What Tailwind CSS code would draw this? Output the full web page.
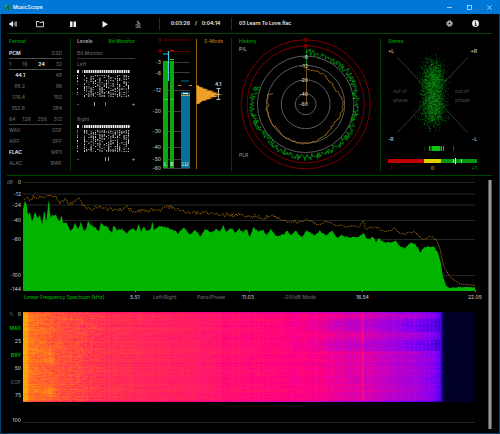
<!DOCTYPE html>
<html lang="en">
<head>
<meta charset="utf-8">
<title>MusicScope</title>
<script src="https://cdn.jsdelivr.net/npm/@tailwindcss/browser@4"></script>
</head>
<body class="bg-black">
<div class="flex min-h-screen flex-col border-x border-b border-[#04406f] bg-black font-['Inter','Liberation_Sans',sans-serif] text-[5px] font-medium leading-[5px] text-[#606060]">

  <header class="-mx-px flex h-[14px] items-center bg-[#0078d7] pl-1 text-white">
    <svg class="size-[7px]" viewBox="0 0 14 14" aria-hidden="true"><circle cx="7" cy="7" r="7" fill="#0c8a86"/><path d="M4 11c1-4 2-7 5-9M8 3c2 2 1 5 1 9M4 5l2 2" fill="none" stroke="#053f4c" stroke-width="1.6"/><circle cx="4" cy="4" r="1.4" fill="#7fd0c0"/></svg>
    <h1 class="ml-0.5 flex-1 font-medium">MusicScope</h1>
    <button class="flex w-5 justify-center" aria-label="Minimize"><svg class="size-[5px]" viewBox="0 0 5 5"><path d="M0 2.5h5" stroke="#fff" stroke-width=".6"/></svg></button>
    <button class="flex w-5 justify-center" aria-label="Maximize"><svg class="size-[5px]" viewBox="0 0 5 5"><rect x=".4" y=".4" width="4.2" height="4.2" fill="none" stroke="#fff" stroke-width=".6"/></svg></button>
    <button class="mr-px flex w-5 justify-center" aria-label="Close"><svg class="size-[5px]" viewBox="0 0 5 5"><path d="M.3.3l4.4 4.4M4.700.3L.3 4.700" stroke="#fff" stroke-width=".6"/></svg></button>
  </header>

  <nav class="ml-1.5 mr-[7px] flex h-5 items-center border-b border-[#004800] text-[#f0f0f0]">
    <button class="w-[17px] pl-0.5" aria-label="Volume"><svg class="size-2" viewBox="0 0 16 16"><path d="M1 5.500h3l4-4v13l-4-4H1z" fill="currentColor"/><path d="M10 5.500a4 4 0 010 5M12 3.500a7 7 0 010 9M14 2.500a9 9 0 010 11" fill="none" stroke="currentColor" stroke-width="1.400"/></svg></button>
    <button class="flex w-8 justify-center" aria-label="Open"><svg class="size-2" viewBox="0 0 16 16"><path d="M1 13.500V3h5l1.500 2H12V3.500h3v10z" fill="none" stroke="currentColor" stroke-width="1.700"/></svg></button>
    <button class="flex w-[33px] justify-center" aria-label="Pause"><svg class="size-2" viewBox="0 0 16 16"><path d="M2 3h5v11H2zM9 3h5v11H9z" fill="currentColor"/></svg></button>
    <button class="flex w-8 justify-center" aria-label="Play"><svg class="size-2" viewBox="0 0 16 16"><path d="M3 2l11 6.500L3 15z" fill="currentColor"/></svg></button>
    <button class="flex w-[33px] justify-center text-[#c0c0c0]" aria-label="Analyze"><svg class="size-2" viewBox="0 0 16 16"><path d="M8 1v6M6 3l4 5M9 4.500c4 1.500 4 6 1 8M3 9.500h6M3 14.500h11M6 12h5" fill="none" stroke="currentColor" stroke-width="1.400"/></svg></button>
    <div class="ml-[5px] h-3 w-px bg-[#004800]"></div>
    <p class="flex w-[71px] items-center justify-center gap-[5px] font-semibold"><time>0:03:26</time><span>/</span><time>0:04:14</time></p>
    <div class="h-3 w-px bg-[#004800]"></div>
    <p class="ml-[7px] flex-1 font-semibold">03 Learn To Love.flac</p>
    <button class="flex w-[26px] justify-center text-[#c0c0c0]" aria-label="Settings"><svg class="size-[7px]" viewBox="0 0 14 14"><circle cx="7" cy="7" r="6" fill="none" stroke="currentColor" stroke-width="2" stroke-dasharray="2.400 2.300"/><circle cx="7" cy="7" r="3.500" fill="none" stroke="currentColor" stroke-width="3"/></svg></button>
    <button class="mr-1 flex w-[26px] justify-center" aria-label="Information"><svg class="size-[7px]" viewBox="0 0 14 14"><circle cx="7" cy="7" r="6.800" fill="currentColor"/><path d="M7 2.500v2.200M5.500 6.200H7.400V11M5.200 11h4" fill="none" stroke="#000" stroke-width="1.800"/></svg></button>
  </nav>

  <section class="ml-1.5 mr-[7px] grid grid-cols-[64fr_78fr_83fr_149fr_111fr] border-b border-[#004800] py-1">
    <div class="border-r border-[#003c00] pl-0.5 pr-2">
      <h2 class="h-[10px] font-semibold leading-[6px] text-[#009600]">Format</h2>
      <div class="flex h-[11px] items-center justify-between border-b border-[#505050]"><b class="font-semibold text-[#e8e8e8]">PCM</b><span>DSD</span></div>
      <div class="flex h-[11px] items-center justify-between border-b border-[#505050]"><span>1</span><span>16</span><b class="text-[#e8e8e8]">24</b><span>32</span></div>
      <div class="flex h-[11px] items-center justify-between"><b class="w-4 text-right font-semibold text-[#e8e8e8]">44.1</b><span>48</span></div>
      <div class="flex h-[11px] items-center justify-between"><span class="w-4 text-right">88.2</span><span>96</span></div>
      <div class="flex h-[11px] items-center justify-between"><span class="w-4 text-right">176.4</span><span>192</span></div>
      <div class="flex h-[11px] items-center justify-between"><span class="w-4 text-right">352.8</span><span>384</span></div>
      <div class="flex h-[11px] items-center justify-between border-b border-[#404040]"><span>64</span><span>128</span><span>256</span><span>512</span></div>
      <div class="flex h-[11px] items-center justify-between"><span>WAV</span><span>DSF</span></div>
      <div class="flex h-[11px] items-center justify-between"><span>AIFF</span><span>DFF</span></div>
      <div class="flex h-[11px] items-center justify-between"><b class="font-semibold text-[#e8e8e8]">FLAC</b><span>MP3</span></div>
      <div class="flex h-[11px] items-center justify-between"><span>ALAC</span><span>BWF</span></div>
    </div>

    <div class="pl-1.5 pr-3.5">
      <div class="flex h-[10px] items-start justify-between leading-[6px]"><button class="font-semibold text-[#aaa]">Levels</button><button class="font-semibold text-[#009600]">Bit Monitor</button></div>
      <h3 class="flex h-[11px] items-center border-b border-[#383838]">Bit Monitor</h3>
      <h4 class="flex h-[11px] items-center">Left</h4>
      <svg id="bitsL" class="w-full" viewBox="77 70 58 27" aria-label="Left channel bits"></svg>
      <div class="flex h-3.5 items-center text-[#ccc]"><span>-</span><div class="flex h-1 flex-1 justify-start gap-[10px] pl-[15px]"><i class="w-px bg-[#aaa]"></i><i class="w-px bg-[#777]"></i></div><span>+</span></div>
      <h4 class="mt-[3px] flex h-[11px] items-center">Right</h4>
      <svg id="bitsR" class="w-full" viewBox="77 70 58 27" aria-label="Right channel bits"></svg>
      <div class="flex h-3.5 items-center text-[#ccc]"><span>-</span><div class="flex h-1 flex-1 justify-start gap-0.5 pl-[26px]"><i class="w-px bg-[#999]"></i><i class="w-px bg-[#999]"></i></div><span>+</span></div>
    </div>

    <div class="border-r border-[#003c00]">
      <svg class="w-full" viewBox="149 38 82 133" aria-label="Level meters">
        <path d="M163 62.500h27M163 72.500h27M163 90.500h27M163 111.500h27M163 131.500h27M163 147.500h27M163 159.500h27M163 168.500h27" stroke="#3c3c3c"/>
        <path d="M163 40h27" stroke="#4a0000" stroke-width="1.500"/><path d="M163 51.500h27" stroke="#5c0000"/>
        <g fill="#bbb" text-anchor="end">
          <text x="161" y="42" fill="#b00000">3</text><text x="161" y="53" fill="#d80000">0</text><text x="161" y="64">-3</text><text x="161" y="75">-6</text><text x="161" y="92">-12</text><text x="161" y="113">-20</text><text x="161" y="133">-30</text><text x="161" y="149">-40</text><text x="161" y="161">-50</text><text x="161" y="170">-60</text>
        </g>
        <path d="M163 61h5v107h-5zM170 61h4v107h-4z" fill="#0ca80c"/>
        <path d="M163 99.500h5M170 99.500h4M170 59.500h4" stroke="#1ce01c"/>
        <path d="M163 54h5" stroke="#0a6a45" stroke-width="2"/><path d="M170 50.500h4" stroke="#e00000"/>
        <path d="M168.500 51v30" stroke="#4cc8f4" stroke-width="1.200"/>
        <path d="M181 92h9v76h-9z" fill="#08719b"/>
        <path d="M183 93.500h5" stroke="#fff"/><path d="M181 95.500h9" stroke="#c99a30"/>
        <path d="M178 85.500h3M189 85.500h3" stroke="#d08a20"/><path d="M181 81h8" stroke="#074a66" stroke-width="1.500"/>
        <g fill="#dff4df"><text x="164" y="166">L</text><text x="170" y="166">R</text><text x="182" y="166">LU</text></g>
        <path d="M196.500 39v130" stroke="#9a600a"/>
        <text x="204" y="43" fill="#b87818">S-Mode</text>
        <path transform="translate(148 34) scale(.3333)" d="M146 153l9 3-2 2 14 3-4 2 19 3-10 2 28 3-12 3 28 3-14 2 23 3-27 3 14 3-28 3 9 3-20 3 4 2-18 3 3 2-9 3 4 2-11 1z" fill="#f0a028"/>
        <text x="215" y="86" fill="#e4e4e4">4.1</text><path d="M216.500 88.500h4M216.500 99.500h4M218.500 88.500v11" stroke="#ddd" stroke-width=".8"/>
      </svg>
    </div>

    <div class="border-r border-[#003c00]">
      <svg class="w-full" viewBox="232 38 148 133" aria-label="Level history">
        <g fill="none" stroke="#5c5c5c"><circle cx="305.700" cy="104.300" r="48.300"/><circle cx="305.700" cy="104.300" r="39"/><circle cx="305.700" cy="104.300" r="24.400"/><circle cx="305.700" cy="104.300" r="10.400"/></g>
        <g fill="none" stroke="#7c0000"><circle cx="305.700" cy="104.300" r="64.600"/><circle cx="305.700" cy="104.300" r="58.600"/></g>
        <path id="histG" fill="none" stroke="#009c10" stroke-width=".8"/>
        <path id="histO" fill="none" stroke="#b87818" stroke-width=".8"/>
        <path d="M306.500 49v19" stroke="#009c10" stroke-width=".8"/><path d="M306.500 68v36" stroke="#8a6a18" stroke-width=".8"/>
        <g fill="#ccc" text-anchor="end"><text x="307" y="42" fill="#c00000">3</text><text x="307" y="48" fill="#d80000">0</text><text x="308" y="59">-6</text><text x="308" y="68">-12</text><text x="308" y="82">-20</text><text x="308" y="96">-40</text><text x="308" y="106">-60</text></g>
        <text x="239" y="43" font-weight="600" fill="#009600">History</text><text x="239" y="51" fill="#aaa">P/L</text><text x="239" y="157" fill="#888">PLR</text>
      </svg>
    </div>

    <svg class="w-full" viewBox="381 38 111 133" aria-label="Stereo field">
      <path d="M397 57l71 76M468 57l-71 76" stroke="#484848" stroke-width=".7"/>
      <g id="cloud"></g>
      <text x="388" y="43" font-weight="600" fill="#009600">Stereo</text>
      <g fill="#ccc"><text x="388" y="53">+L</text><text x="388" y="141">-R</text><text x="477" y="53" text-anchor="end">+R</text><text x="477" y="141" text-anchor="end">-L</text></g>
      <g fill="#404040"><text x="393" y="93">out of</text><text x="393" y="102">phase</text><text x="455" y="93">out of</text><text x="455" y="102">phase</text></g>
      <path d="M429 146h1v5h-1zM432 146h8v5h-8zM441 146h1v5h-1zM443 146h1v5h-1z" fill="#0fc40f"/><path d="M424 146h.500v5h-.500zM430 146h2v5h-2zM440 146h1v5h-1zM453 146h1v5h-1z" fill="#086808"/>
      <path d="M388 159h36v4h-36z" fill="#c00000"/><path d="M424 159h17v4h-17z" fill="#dcd000"/><path d="M441 159h36v4h-36z" fill="#00980c"/>
      <path d="M453 159h1v4h-1zM461 159h1v4h-1z" fill="#8fe08f"/><path d="M455 158h1v6h-1z" fill="#fff"/>
      <text x="388" y="170" fill="#a00000">-1</text><text x="432.500" y="170" text-anchor="middle" fill="#c8bc00">0</text><text x="477" y="170" text-anchor="end" fill="#009008">+1</text>
    </svg>
  </section>

  <section class="ml-1.5 mr-[7px] flex flex-1 gap-[5px]">
    <div class="min-w-0 flex-1">
      <svg class="block w-full" viewBox="7 176 476 116" aria-label="Frequency spectrum">
        <path d="M23 182.500h452M23 220.500h452M23 239.500h452M23 275.500h452" stroke="#242424"/><path d="M23 194h452M23 205h452" stroke="#151515" stroke-width="2"/>
        <path id="spec" fill="#00b400"/>
        <path id="peak" fill="none" stroke="#9a680a" stroke-width="1" stroke-dasharray="1.300 .8"/>
        <path d="M135.500 291v2M249.500 291v2M362.500 291v2M475.500 291v2" stroke="#888"/>
        <g fill="#bbb" text-anchor="end"><text x="13" y="184" fill="#606060">dB</text><text x="21" y="184">0</text><text x="21" y="196">-12</text><text x="21" y="207">-24</text><text x="21" y="222">-40</text><text x="21" y="241">-60</text><text x="21" y="277">-100</text><text x="21" y="291">-144</text></g>
      </svg>
      <div class="grid h-[10px] grid-cols-[106fr_23fr_44fr_45fr_41fr_73fr_112fr_15fr] items-center justify-items-start whitespace-nowrap pl-[17px] text-[#bbb]">
        <button class="text-[#00b000]">Linear Frequency Spectrum [kHz]</button><span>5.51</span><button class="text-[#646464]">Left/Right</button><button class="text-[#646464]">Pans/Phase</button><span>11.03</span><button class="text-[#646464]">-200dB Mode</button><span>16.54</span><span>22.05</span>
      </div>
      <div class="mt-[10px] flex h-[90px] gap-0.5 pr-2">
        <div class="flex w-3.5 flex-col items-end justify-between pb-1 text-[#bbb]">
          <div class="flex w-full justify-between pl-0.5"><span class="text-[#646464]">%</span><span>0</span></div>
          <button class="text-[#00c000]">MAX</button><span>25</span><button class="text-[#00c000]">BRY</button><span>50</span><button class="text-[#606060]">COF</button><span>75</span>
        </div>
        <canvas id="gram" width="452" height="90" class="h-full min-w-0 flex-1" aria-label="Spectrogram"></canvas>
      </div>
      <div class="mt-4 flex h-[5px] items-end gap-0.5 pr-2"><span class="w-3.5 text-right text-[#bbb]">100</span><div class="h-px flex-1 bg-[#222]"></div></div>
    </div>
    <div class="my-1 w-1 border-x border-[#555] bg-[#999]"></div>
  </section>
</div>

<script>
let seed = 7;
const rnd = () => (seed = (seed * 16807) % 2147483647) / 2147483647;
const byId = id => document.getElementById(id);
const NS = 'http://www.w3.org/2000/svg';
const addPath = (parent, d, fill) => {
  const p = document.createElementNS(NS, 'path');
  p.setAttribute('d', d); p.setAttribute('fill', fill); parent.appendChild(p);
};

// Bit matrices: a solid header row above randomly set bits
for (const id of ['bitsL', 'bitsR']) {
  let bright = '', dim = '', head = 'M77 70h2v3h-2zM82 70h.5v3h-.5z';
  const cols = [77]; for (let x = 84; x < 130; x += 2.2) cols.push(x);
  for (const x of cols.slice(1)) head += `M${x} 70h1.600v3h-1.600z`;
  cols.forEach((x, i) => {
    const density = i === 0 ? .6 : i % 4 === 0 ? .85 : i % 4 === 1 ? .65 : .45;
    for (let y = 75; y < 97; y++) {
      const r = rnd();
      if (r < density * .55) bright += `M${x} ${y}h1v1h-1z`;
      else if (r < density) dim += `M${x} ${y}h1v1h-1z`;
    }
  });
  addPath(byId(id), head, '#eee'); addPath(byId(id), bright, '#c8c8c8'); addPath(byId(id), dim, '#666');
}

// Polar history traces, clockwise from the top
const interp = (pts, x) => {
  for (let i = 1; i < pts.length; i++) if (x <= pts[i][0]) {
    const [a, b] = pts[i - 1], [c, e] = pts[i];
    return b + (e - b) * (x - a) / (c - a);
  }
  return pts[pts.length - 1][1];
};
const polar = (pts, noise, step, end) => {
  let d = '';
  for (let a = 1; a <= end; a += step) {
    const r = interp(pts, a) + (rnd() - .5) * noise, t = a * Math.PI / 180;
    d += `${d ? 'L' : 'M'}${(305.7 + r * Math.sin(t)).toFixed(1)} ${(104.3 - r * Math.cos(t)).toFixed(1)}`;
  }
  return d;
};
byId('histG').setAttribute('d', polar([[0, 53], [20, 50], [50, 53], [90, 50], [130, 52], [180, 53], [230, 51], [265, 54], [290, 52]], 7, .9, 290));
byId('histO').setAttribute('d', polar([[0, 35], [20, 35], [50, 33], [65, 33], [80, 37], [100, 37], [130, 34], [150, 37], [180, 39], [195, 39], [225, 38], [265, 39], [270, 36], [274, 40], [279, 38], [283, 39], [289, 35]], 1.8, 2.5, 290));

// Stereo point cloud
const gauss = () => (rnd() + rnd() + rnd() + rnd() - 2) * 1.7;
for (const [n, sx, sy, fill] of [[500, 8, 16, '#053f08'], [1900, 6, 13, '#075a0a'], [1000, 5.5, 12.5, '#0a8a10']]) {
  let d = '';
  for (let i = 0; i < n; i++) {
    const x = 433 + gauss() * sx, y = (rnd() < .5 ? 80 : 106) + gauss() * sy * .75;
    d += `M${x.toFixed(1)} ${y.toFixed(1)}h.7v.7h-.7z`;
  }
  addPath(byId('cloud'), d, fill);
}

// Spectrum samples, in thirds of a unit
const specPts = [[69,110],[75,88],[80,100],[84,128],[90,122],[96,150],[106,120],[114,140],[120,130],[126,155],[133,112],[139,155],[143,110],[146,72],[149,112],[152,145],[157,122],[163,135],[168,125],[176,150],[181,148],[185,123],[190,160],[197,148],[212,180],[225,155],[235,172],[243,148],[250,175],[258,172],[264,146],[274,162],[285,165],[298,180],[301,152],[310,160],[322,165],[336,183],[341,160],[352,175],[365,170],[380,185],[397,168],[409,180],[415,155],[423,178],[431,162],[440,175],[452,172],[457,140],[462,175],[476,160],[490,164],[510,168],[525,175],[535,185],[552,165],[570,190],[585,175],[603,192],[615,172],[635,180],[650,172],[660,180],[670,158],[678,182],[692,168],[705,182],[717,170],[730,182],[740,172],[749,195],[760,165],[775,178],[790,175],[800,190],[812,172],[825,190],[840,192],[862,178],[875,190],[885,175],[905,195],[922,175],[940,190],[960,176],[980,190],[998,175],[1010,198],[1025,190],[1050,198],[1070,195],[1090,185],[1105,205],[1118,192],[1128,210],[1136,200],[1155,212],[1175,212],[1187,205],[1200,222],[1215,228],[1230,215],[1240,212],[1253,225],[1260,245],[1270,228],[1285,225],[1298,220],[1310,235],[1318,255],[1322,270],[1328,310],[1338,342],[1350,347],[1380,345],[1425,346]];
const peakPts = [[72,85],[78,68],[85,85],[100,75],[115,80],[150,65],[165,75],[180,90],[190,80],[210,97],[238,82],[255,105],[280,110],[300,103],[320,110],[360,113],[380,105],[400,118],[440,115],[470,115],[510,103],[540,115],[580,122],[650,125],[700,130],[750,130],[790,137],[820,132],[860,148],[930,145],[950,158],[980,150],[1010,160],[1080,165],[1090,142],[1097,172],[1125,165],[1160,180],[1185,170],[1205,188],[1247,180],[1265,203],[1295,192],[1310,205],[1320,230],[1330,280],[1350,315],[1380,336],[1425,340]];
let spec = 'M23 291', peak = '';
for (let x = 69; x <= 1426; x += 3) {
  const y = interp(specPts, x) + (rnd() - .5) * (x > 1338 ? 3 : 7);
  spec += `L${(x / 3).toFixed(1)} ${(172 + y / 3).toFixed(1)}`;
}
for (let x = 72; x <= 1426; x += 4) {
  const n = x > 1310 ? 0 : x < 900 ? 13 : 7;
  const y = interp(peakPts, x) + (rnd() - .5) * n;
  peak += `${peak ? 'L' : 'M'}${(x / 3).toFixed(1)} ${(172 + y / 3).toFixed(1)}`;
}
byId('spec').setAttribute('d', spec + 'L475.500 291z');
byId('peak').setAttribute('d', peak);

// Spectrogram
const ctx = byId('gram').getContext('2d');
const img = ctx.createImageData(452, 90);
const ramp = [[0, [0, 0, 36]], [.08, [0, 0, 60]], [.2, [70, 0, 225]], [.3, [130, 0, 245]], [.42, [200, 0, 190]], [.52, [255, 0, 130]], [.65, [255, 38, 90]], [.8, [255, 95, 45]], [.95, [255, 160, 10]], [1.1, [255, 205, 30]]];
const level = [[0, .97], [4, .96], [6, .85], [35, .77], [80, .68], [150, .635], [200, .59], [232, .56], [300, .51], [335, .46], [360, .42], [390, .37], [410, .31], [416, .27], [419, .1], [422, .03], [452, 0]];
const rowN = [...Array(90)].map(() => rnd() - .5), colN = [...Array(452)].map(() => rnd() - .5);
for (let y = 0; y < 90; y++) {
  let drift = 0;
  for (let x = 0; x < 452; x++) {
    drift = drift * .6 + (rnd() - .5) * .6;
    let v = interp(level, x);
    if (x < 417) {
      v += rowN[y] * .05 + colN[x] * .03 + drift * (x > 5 && x < 80 ? .14 : .06);
      if (x > 255 && ((y > 6 && y < 20) || (y > 27 && y < 39))) v -= .05 * Math.min(1, (x - 255) / 60) + (x % 4 < 2 && x > 380 ? .04 : 0);
      // Soft bright spots in the low band
      for (const cy of [46, 79]) v += .1 * Math.exp(-((x - 27) ** 2) / 22 - ((y - cy) ** 2) / 35);
      if (x === 339 || x === 340) v += rnd() < .6 ? .13 : .05;
      if (x === 370 || x === 392) v += .04;
      if (x > 198 && x < 206) v -= .03;
      if (y === 16 || y === 38) v += x < 230 ? .03 : 0;
      if (y === 0 || y === 89) v -= .08;
    } else if (x < 440) v += Math.max(0, rowN[y]) * .05 * (440 - x) / 22;
    v = Math.max(0, Math.min(1.09, v));
    let i = 1; while (ramp[i][0] < v) i++;
    const [a, p] = ramp[i - 1], [b, q] = ramp[i], t = (v - a) / (b - a), o = (y * 452 + x) * 4;
    for (let c = 0; c < 3; c++) img.data[o + c] = p[c] + (q[c] - p[c]) * t;
    img.data[o + 3] = 255;
  }
}
ctx.putImageData(img, 0, 0);
</script>
</body>
</html>
